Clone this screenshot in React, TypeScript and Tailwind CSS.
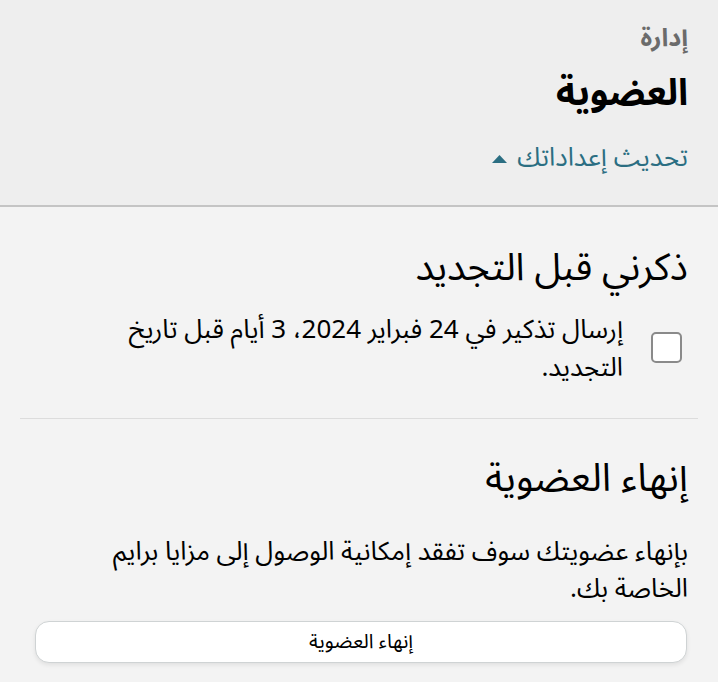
export default function App() {
  return (
    <div
      dir="rtl"
      className="min-h-[682px] w-[718px] bg-[#f3f3f3] text-black"
      style={{ fontFamily: '"Noto Sans Arabic", "DejaVu Sans", "Noto Sans", sans-serif' }}
    >
      <header className="bg-[#eeeeee] border-b-2 border-[#c4c4c4] px-[30px] pt-[22px] pb-[30px]">
        <div className="text-[25px] font-bold text-[#6b6b6b] leading-[32px]">إدارة</div>
        <h1 className="text-[37px] font-bold leading-[48px] mt-[15px]">العضوية</h1>
        <button className="mt-[24px] flex items-center gap-[10px] text-[26px] text-[#2b6e82] leading-[34px]">
          <span>تحديث إعداداتك</span>
          <svg width="15" height="8" viewBox="0 0 15 8" className="mt-[2px]">
            <path d="M7.5 0 L15 8 L0 8 Z" fill="#2b6e82" />
          </svg>
        </button>
      </header>

      <section className="mx-[20px] px-[10px] pt-[33px] pb-[31px] border-b border-[#dcdcdc]">
        <h2 className="text-[38px] leading-[56px]">ذكرني قبل التجديد</h2>
        <label className="mt-[15px] flex items-start gap-[28px] pr-[6px]">
          <span className="mt-[21px] w-[31px] h-[31px] shrink-0 rounded-[5px] border-2 border-[#8a8a8a] bg-white" />
          <span className="text-[26px] leading-[38px] max-w-[540px]">
            إرسال تذكير في 24 فبراير 2024، 3 أيام قبل تاريخ التجديد.
          </span>
        </label>
      </section>

      <section className="px-[30px] pt-[32px] pb-[20px]">
        <h2 className="text-[39px] leading-[56px]">إنهاء العضوية</h2>
        <p className="mt-[26px] text-[26px] leading-[37px] max-w-[610px]">
          بإنهاء عضويتك سوف تفقد إمكانية الوصول إلى مزايا برايم الخاصة بك.
        </p>
        <button className="mt-[14px] mr-[1px] w-[652px] h-[42px] rounded-[14px] bg-white border border-[#cfd3d4] shadow-[0_2px_4px_rgba(0,0,0,0.08)] text-[20px]">
          إنهاء العضوية
        </button>
      </section>
    </div>
  )
}
